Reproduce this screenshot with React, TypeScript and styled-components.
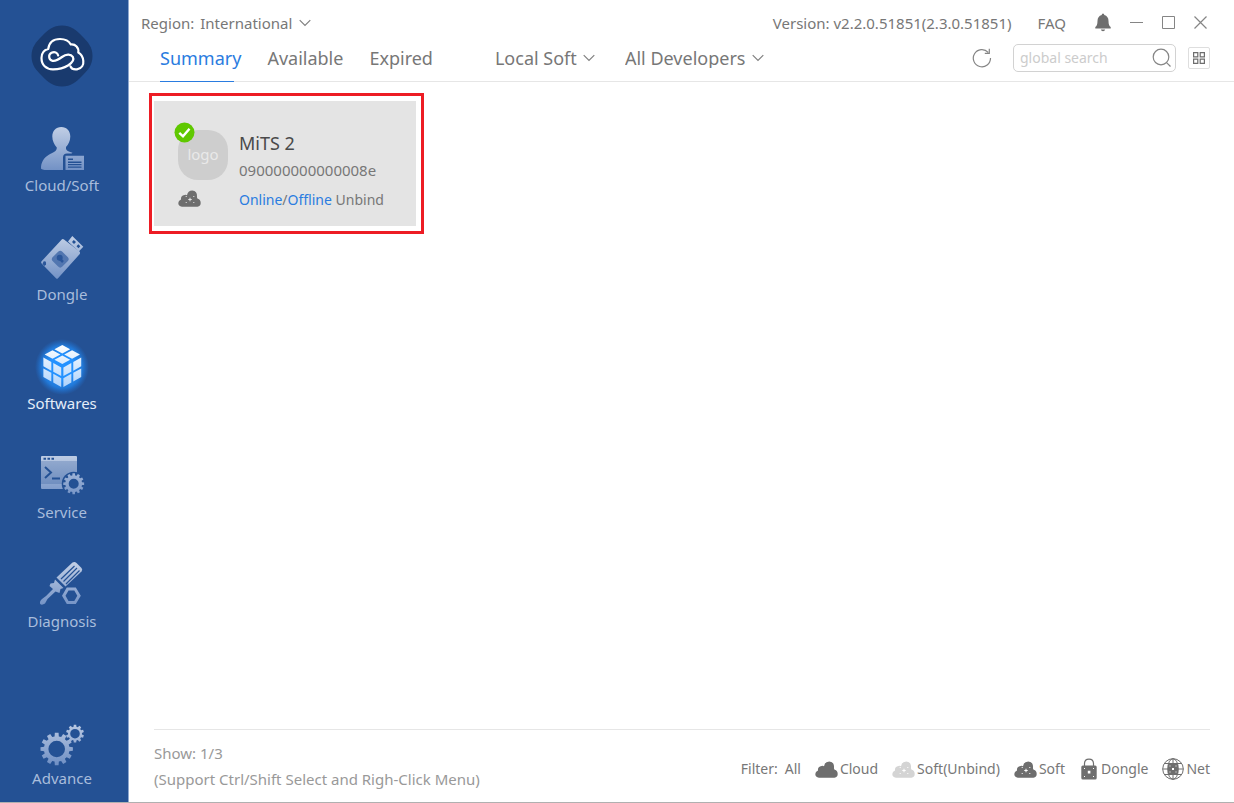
import React from "react";
import styled, { createGlobalStyle, css } from "styled-components";

const color = {
  navy: "#245194",
  blue: "#2a7ce0",
  text: "#777777",
  muted: "#999999",
  line: "#e6e6e6",
  icon: "#6e6e6e",
  stroke: "#858585",
};

const GlobalStyle = createGlobalStyle`
  *, *::before, *::after { box-sizing: border-box; }
  body {
    margin: 0;
    background: #fff;
    color: ${color.text};
    font-family: "Noto Sans", "Open Sans", sans-serif;
    font-size: 15px;
    line-height: 20px;
  }
  button, input, select { font: inherit; color: inherit; }
  svg { display: block; flex: none; }
`;

/* ---------- layout ---------- */

const Shell = styled.div`
  display: grid;
  grid-template-columns: 129px minmax(0, 1fr);
  min-height: 100vh;
  border-bottom: 1px solid #b0b0b0;
`;

const Sidebar = styled.aside`
  display: flex;
  flex-direction: column;
  align-items: center;
  padding: 25px 4px 14px 0;
  background: ${color.navy};
  border-right: 1px solid #8fa8cf;
`;

const SideNav = styled.nav`
  display: flex;
  flex: 1;
  flex-direction: column;
  gap: 40px;
  margin-top: 39px;
  width: 100%;
`;

const SideItem = styled.button<{ $active?: boolean; $last?: boolean }>`
  display: flex;
  flex-direction: column;
  align-items: center;
  gap: 1px;
  padding: 0;
  border: 0;
  background: none;
  color: ${(p) => (p.$active ? "#e4edf9" : "#a9bddc")};
  cursor: pointer;
  ${(p) => p.$last && css`margin-top: auto;`}
`;

const Main = styled.main`
  display: flex;
  flex-direction: column;
  min-width: 0;
`;

const Header = styled.header`
  border-bottom: 1px solid ${color.line};
`;

const TitleRow = styled.div`
  display: flex;
  align-items: center;
  height: 35px;
  padding: 10px 27px 0 12px;
`;

const ToolRow = styled.div`
  display: flex;
  align-items: center;
  height: 46px;
  padding: 0 24px 0 31px;
`;

const Spacer = styled.div`
  flex: 1;
`;

/* ---------- header controls ---------- */

const Picker = styled.label<{ $large?: boolean }>`
  display: flex;
  align-items: center;
  gap: 6px;
  font-size: ${(p) => (p.$large ? 18 : 15)}px;
  & + & { margin-left: 30px; }
`;

const PickerSelect = styled.select`
  appearance: none;
  padding: 0;
  border: 0;
  background: none;
  outline: none;
  cursor: pointer;
`;

const FaqLink = styled.a`
  margin: 0 29px 0 26px;
  color: inherit;
  text-decoration: none;
`;

const WindowControls = styled.div`
  display: flex;
  align-items: center;
  gap: 19px;
`;

const IconButton = styled.button`
  display: flex;
  align-items: center;
  justify-content: center;
  padding: 0;
  border: 0;
  background: none;
  cursor: pointer;
`;

const Tabs = styled.nav`
  display: flex;
  gap: 26px;
  height: 47px;
  align-self: flex-start;
  margin-right: 62px;
`;

const Tab = styled.button<{ $active?: boolean }>`
  position: relative;
  padding: 0 0 1px;
  border: 0;
  background: none;
  font-size: 18px;
  color: ${(p) => (p.$active ? color.blue : color.text)};
  cursor: pointer;
  ${(p) =>
    p.$active &&
    css`
      &::after {
        content: "";
        position: absolute;
        left: 0;
        right: 7px;
        bottom: 0;
        height: 1px;
        background: ${color.blue};
      }
    `}
`;

const SearchBox = styled.label`
  display: flex;
  align-items: center;
  width: 163px;
  height: 28px;
  margin: 0 12px 0 21px;
  padding: 0 3px 0 6px;
  border: 1px solid #d2d2d2;
  border-radius: 5px;
  font-size: 14px;
`;

const SearchInput = styled.input`
  flex: 1;
  min-width: 0;
  padding: 0;
  border: 0;
  outline: none;
  background: none;
  &::placeholder { color: #cccccc; opacity: 1; }
`;

const ViewButton = styled(IconButton)`
  width: 22px;
  height: 22px;
  border: 1px solid #dedede;
  border-radius: 2px;
`;

/* ---------- content ---------- */

const Content = styled.section`
  flex: 1;
  padding: 11px 20px;
`;

const Frame = styled.div`
  width: 275px;
  padding: 5px 5px 5px 2px;
  border: 3px solid #ed1c24;
`;

const Card = styled.article`
  display: flex;
  gap: 11px;
  width: 262px;
  height: 125px;
  padding: 29px 24px 0;
  background: #e4e4e4;
`;

const CardMedia = styled.div`
  display: flex;
  flex-direction: column;
  gap: 10px;
`;

const AppLogo = styled.div`
  position: relative;
  display: flex;
  align-items: center;
  justify-content: center;
  width: 50px;
  height: 50px;
  padding-bottom: 3px;
  border-radius: 20px;
  background: #cecece;
  color: #e9e9e9;
`;

const Badge = styled.span`
  position: absolute;
  top: -8px;
  left: -4px;
`;

const CardText = styled.div`
  display: flex;
  flex-direction: column;
  gap: 2px;
`;

const CardTitle = styled.h2`
  margin: 0;
  font-size: 18px;
  font-weight: 400;
  line-height: 26px;
  color: #4a4a4a;
`;

const CardLine = styled.div<{ $small?: boolean }>`
  font-size: ${(p) => (p.$small ? 14 : 15)}px;
  line-height: ${(p) => (p.$small ? 32 : 24)}px;
  white-space: nowrap;
`;

const CardLink = styled.a<{ $plain?: boolean }>`
  color: ${(p) => (p.$plain ? "inherit" : color.blue)};
  text-decoration: none;
`;

/* ---------- footer ---------- */

const Footer = styled.footer`
  display: flex;
  justify-content: space-between;
  align-items: center;
  height: 73px;
  margin: 0 24px 0 25px;
  border-top: 1px solid ${color.line};
`;

const Status = styled.div`
  color: ${color.muted};
  line-height: 26px;
`;

const Filters = styled.div`
  display: flex;
  align-items: center;
  gap: 14px;
  margin-top: 6px;
  font-size: 14px;
`;

const FilterLead = styled.div`
  display: flex;
  gap: 7px;
`;

const FilterButton = styled.button`
  display: flex;
  align-items: center;
  gap: 2px;
  padding: 0;
  border: 0;
  background: none;
  cursor: pointer;
`;

/* ---------- icons ---------- */

type Pt = [number, number];

const gear = (cx: number, cy: number, outer: number, root: number, hole: number, teeth: number) => {
  const pts: string[] = [];
  const step = (Math.PI * 2) / teeth;
  for (let i = 0; i < teeth; i++) {
    const a = i * step - Math.PI / 2;
    ([[-0.32, root], [-0.22, outer], [0.22, outer], [0.32, root]] as Pt[]).forEach(([o, r]) => {
      pts.push(`${(cx + r * Math.cos(a + o * step)).toFixed(2)} ${(cy + r * Math.sin(a + o * step)).toFixed(2)}`);
    });
  }
  return `M${pts.join("L")}Z M${cx - hole} ${cy}a${hole} ${hole} 0 1 0 ${hole * 2} 0a${hole} ${hole} 0 1 0 ${-hole * 2} 0Z`;
};

const tiles = (o: Pt, u: Pt, v: Pt) => {
  const at = (a: number, b: number) => `${(o[0] + u[0] * a + v[0] * b).toFixed(2)} ${(o[1] + u[1] * a + v[1] * b).toFixed(2)}`;
  const spans: Pt[] = [[0.04, 0.45], [0.55, 0.96]];
  return spans
    .flatMap(([a, b]) => spans.map(([c, d]) => `M${at(a, c)}L${at(b, c)}L${at(b, d)}L${at(a, d)}Z`))
    .join("");
};

const SideIcon = ({ id, children, bright }: { id: string; children: React.ReactNode; bright?: boolean }) => (
  <svg width="44" height="48" viewBox="0 0 44 48" fill={`url(#${id})`} overflow="visible" aria-hidden="true">
    <defs>
      <linearGradient id={id} gradientUnits="userSpaceOnUse" x1="0" y1="0" x2="0" y2="46">
        <stop offset="0" stopColor={bright ? "#ffffff" : "#c3d0e6"} />
        <stop offset="1" stopColor={bright ? "#a9d0fb" : "#6f8fc4"} />
      </linearGradient>
      <radialGradient id={`${id}-halo`}>
        <stop offset="0.45" stopColor="#2492ff" />
        <stop offset="0.75" stopColor="#2187f0" stopOpacity="0.75" />
        <stop offset="1" stopColor="#2078dc" stopOpacity="0" />
      </radialGradient>
    </defs>
    {children}
  </svg>
);

const BrandLogo = () => (
  <svg width="62" height="62" viewBox="0 0 62 62" fill="none" role="img" aria-label="Brand">
    <path
      d="M31 .5C40 .5 45 5 51 11C57 17 61.500 22 61.500 31C61.500 40 57 45 51 51C45 57 40 61.500 31 61.500C22 61.500 17 57 11 51C5 45 .5 40 .5 31C.5 22 5 17 11 11C17 5 22 .5 31 .5Z"
      fill="#193a6e"
    />
    <path
      d="M39.500 41.500C40.500 44 43.500 44.600 46 44.300C51 43.500 52.700 39.500 52.300 36C52 32 50 29 47.300 27.500C48 22.500 44.500 19 39.800 19.500C38 16 34 14 29 14C22 14 18 18 17.200 24C13 25 10.500 28 10.500 33C10.500 40 15 44.300 22 44.300C29 44.300 33 43 37 40.500C41 38 43.500 35 41.800 31.800C39.700 28.500 35 29 31 32C27 35 24 36.300 21.500 35.800C17.500 35 17 29.500 20.500 27.800C23.500 26.300 26.500 27.500 27.200 30.500"
      stroke="#fff"
      strokeWidth="2.200"
      strokeLinecap="round"
      strokeLinejoin="round"
    />
  </svg>
);

const PersonIcon = () => (
  <SideIcon id="g-person">
    <path d="M21.300 1C26.800 1 30.300 5 30.300 10.500C30.300 15 28.300 18.500 26 21C25.500 24.500 28 25.500 32.500 26.700L31.500 27.500H27C24.500 27.500 23 29 23 31.500V44H7C3.500 44 1 43.400 1 42.500C1 36.500 3.500 32 8.500 29C13 26.500 17 25.500 16.800 21.500C14.300 18.500 12.300 15 12.300 10.500C12.300 5 15.800 1 21.300 1Z" />
    <path fillRule="evenodd" d="M25.500 29.700H44V44H25.500ZM28 32.500V34H33V32.500ZM28 35.500V37H41.500V35.500ZM28 38V39.300H41.500V38ZM28 40.500V41.800H41.500V40.500Z" />
  </SideIcon>
);

const DongleIcon = () => (
  <SideIcon id="g-dongle">
    <path d="M22 4.300Q23 3.600 24 4.500L39.500 16.500Q40.500 17.500 39.800 19L18 43.300Q17 44.300 16 43.300L1.600 28.500Q.6 27.300 1.600 26.200Z" />
    <path fillRule="evenodd" d="M32.300 1L43.300 11.800L38.800 16.500L28 6.500ZM33.800 5L32 7L34 9L36 7ZM38.300 9.300L36.500 11.200L38.500 13.200L40.300 11.200Z" />
    <rect x="13.500" y="17.500" width="13.500" height="13.500" rx="3" transform="rotate(45 20.300 24.200)" fill="#5276b0" />
    <circle cx="19.700" cy="22.800" r="3" fill="#2b569a" />
    <path d="M20 24L23 27" stroke="#2b569a" strokeWidth="2.500" />
    <path d="M3.500 26.500Q6.500 25 6 29.500L4.500 31L2.500 29Z" fill="#2b569a" />
  </SideIcon>
);

const CubeIcon = () => (
  <SideIcon id="g-cube" bright>
    <ellipse cx="22" cy="23" rx="27" ry="28" fill="url(#g-cube-halo)" />
    <path d={tiles([22.3, 0.3], [19.2, 10.2], [-19.2, 10.2])} />
    <path d={tiles([2.6, 12.3], [19.4, 10.7], [0, 21.2])} />
    <path d={tiles([22.6, 23], [19.4, -10.7], [0, 21.2])} />
  </SideIcon>
);

const ServiceIcon = () => (
  <SideIcon id="g-service">
    <defs>
      <mask id="service-cut">
        <rect width="44" height="48" fill="#fff" />
        <circle cx="33.700" cy="30.700" r="12" fill="#000" />
      </mask>
    </defs>
    <g mask="url(#service-cut)">
      <path d="M1 4Q1 3 2 3H36Q37 3 37 4V8H1Z" />
      <path d="M1 8H37V31H1Z" opacity=".75" />
      <path d="M1 31H37V35Q37 36 36 36H2Q1 36 1 35Z" />
      <path d="M3.500 5.700H6M7.500 5.700H10M11.500 5.700H14" stroke={color.navy} strokeWidth="2" />
      <path d="M5 14L11 19.500L5 25M12 25.500H20" fill="none" stroke={color.navy} strokeWidth="2" />
    </g>
    <path fillRule="evenodd" d={gear(33.7, 30.7, 10.5, 8.4, 5, 12)} />
  </SideIcon>
);

const DiagnosisIcon = () => (
  <SideIcon id="g-diagnosis">
    <path d="M32.500 .6Q34.500 -1 36.500 1L41.500 6Q43 7.800 41.500 9.600L25.500 24.500L16.500 15.500Z" />
    <path d="M34.500 4L21 17M37 6L23.500 19.500M39.500 8.500L26 22" stroke={color.navy} strokeWidth="1.200" />
    <path d="M15 17.500L23.500 26L20.500 27L19.500 31L15.500 29.500L7.500 37L5 41.500Q2 43.500 .2 42Q-.8 39.500 2 37L6 34L13 27L9.500 24L10.500 21.500L14 21Z" />
    <path fillRule="evenodd" d="M26.800 25.500H35.800L40.800 33.800L35.800 42H26.800L22 33.800ZM28.500 28.500L25.500 33.800L28.500 39H34.300L37.300 33.800L34.300 28.500Z" />
  </SideIcon>
);

const AdvanceIcon = () => (
  <SideIcon id="g-advance">
    <path fillRule="evenodd" d={gear(16.7, 30, 16.3, 12.8, 8.3, 12)} />
    <path fillRule="evenodd" d={gear(35, 14.7, 9, 7, 4.8, 10)} />
  </SideIcon>
);

const Chevron = () => (
  <svg width="12" height="8" viewBox="0 0 12 8" fill="none" stroke="#808080" strokeWidth="1.200" aria-hidden="true">
    <path d="M.7 1.200L6 6.500L11.300 1.200" />
  </svg>
);

const BellIcon = () => (
  <svg width="16" height="19" viewBox="0 0 16 19" fill={color.icon} aria-hidden="true">
    <path d="M8 .5Q9.300 .5 9.300 2Q13.500 3.300 13.500 8C13.500 11.500 14.300 13 15.700 14V15.500H.3V14C1.700 13 2.500 11.500 2.500 8Q2.500 3.300 6.700 2Q6.700 .5 8 .5Z" />
    <path d="M5.800 16.500H10.200Q9.800 18.300 8 18.300Q6.200 18.300 5.800 16.500Z" />
  </svg>
);

const MinimizeIcon = () => (
  <svg width="13" height="13" viewBox="0 0 13 13" stroke={color.stroke} aria-hidden="true">
    <path d="M0 6.500H13" />
  </svg>
);

const MaximizeIcon = () => (
  <svg width="13" height="13" viewBox="0 0 13 13" fill="none" stroke={color.stroke} aria-hidden="true">
    <path d="M.5 .5H12.500V12.500H.5Z" />
  </svg>
);

const CloseIcon = () => (
  <svg width="13" height="13" viewBox="0 0 13 13" fill="none" stroke={color.stroke} strokeWidth="1.200" aria-hidden="true">
    <path d="M.5 .5L12.500 12.500M12.500 .5L.5 12.500" />
  </svg>
);

const RefreshIcon = () => (
  <svg width="20" height="20" viewBox="0 0 20 20" fill="none" stroke={color.stroke} strokeWidth="1.200" aria-hidden="true">
    <path d="M18.500 10A8.600 8.600 0 1 1 16.200 4.300M17.300 .8V5.300H12.800" />
  </svg>
);

const SearchIcon = () => (
  <svg width="20" height="20" viewBox="0 0 20 20" fill="none" stroke={color.stroke} strokeWidth="1.200" aria-hidden="true">
    <circle cx="9" cy="9" r="7.800" />
    <path d="M14.800 14.800L18.500 18.500" />
  </svg>
);

const GridIcon = () => (
  <svg width="12" height="12" viewBox="0 0 12 12" fill="none" stroke={color.icon} strokeWidth="1.200" aria-hidden="true">
    <path d="M.6 .6H4.800V4.800H.6ZM7.200 .6H11.400V4.800H7.200ZM.6 7.200H4.800V11.400H.6ZM7.200 7.200H11.400V11.400H7.200Z" />
  </svg>
);

const CheckIcon = () => (
  <svg width="21" height="21" viewBox="0 0 21 21" aria-hidden="true">
    <circle cx="10.500" cy="10.500" r="10" fill="#5fc800" />
    <path d="M5.300 10.800L9 14.300L15.500 6.800" fill="none" stroke="#fff" strokeWidth="2.400" />
  </svg>
);

const CloudIcon = ({ fill = color.icon, chip, dots = "#e4e4e4" }: { fill?: string; chip?: boolean; dots?: string }) => (
  <svg width="23" height="17" viewBox="0 0 23 17" aria-hidden="true">
    <path
      fill={fill}
      d="M4 16.700Q.3 16.300 .3 13Q.3 10.500 3 9.500Q2.500 5.500 6.500 5Q8 4.500 9 5.200Q9.800 .5 14.300 .5Q19.300 .8 19 6.500Q18.800 7.800 19.700 8.800Q22.700 9.500 22.700 13Q22.700 16.300 19.500 16.700Z"
    />
    {chip && (
      <path
        fill={dots}
        d="M11.500 7.800h1v1.200h1.200v1h-1.200v1.200h-1V10h-1.200V9h1.200ZM7.700 6h1v1h-1ZM15.300 6h1v1h-1ZM7.700 12h1v1h-1ZM15.300 12h1v1h-1Z"
      />
    )}
  </svg>
);

const LockIcon = () => (
  <svg width="20" height="22" viewBox="0 0 20 22" aria-hidden="true">
    <path d="M5.500 8V5.800Q5.500 1.200 10 1.200Q14.500 1.200 14.500 5.800V8" fill="none" stroke={color.icon} strokeWidth="1.200" />
    <rect x="2.300" y="7.500" width="15.400" height="14" rx="1.500" fill={color.icon} />
    <path fill="#fff" d="M8.800 12.800h2.600v2.600H8.800ZM5 10h1v1H5ZM14 10h1v1h-1ZM5 18h1v1H5ZM14 18h1v1h-1Z" />
  </svg>
);

const GlobeIcon = () => (
  <svg width="22" height="22" viewBox="0 0 22 22" aria-hidden="true">
    <g fill="none" stroke={color.icon}>
      <circle cx="11" cy="11" r="10.300" />
      <ellipse cx="11" cy="11" rx="5.300" ry="10.300" />
      <path d="M11 .7V21.300M.7 11H21.300M2.300 5.500H19.700M2.300 16.500H19.700" />
    </g>
    <rect x="6" y="6" width="10" height="10" rx="1" fill={color.icon} />
    <path fill="#fff" d="M10 10h2v2h-2ZM7.500 7.500h1v1h-1ZM13.500 7.500h1v1h-1ZM7.500 13.500h1v1h-1ZM13.500 13.500h1v1h-1Z" />
  </svg>
);

/* ---------- data ---------- */

const sideItems = [
  { label: "Cloud/Soft", Icon: PersonIcon },
  { label: "Dongle", Icon: DongleIcon },
  { label: "Softwares", Icon: CubeIcon, active: true },
  { label: "Service", Icon: ServiceIcon },
  { label: "Diagnosis", Icon: DiagnosisIcon },
  { label: "Advance", Icon: AdvanceIcon, last: true },
];

const filters = [
  { label: "Cloud", icon: <CloudIcon /> },
  { label: "Soft(Unbind)", icon: <CloudIcon fill="#d4d4d4" chip dots="#fff" /> },
  { label: "Soft", icon: <CloudIcon chip dots="#fff" /> },
  { label: "Dongle", icon: <LockIcon /> },
  { label: "Net", icon: <GlobeIcon /> },
];

export default function App() {
  return (
    <>
      <GlobalStyle />
      <Shell>
        <Sidebar>
          <BrandLogo />
          <SideNav aria-label="Main">
            {sideItems.map(({ label, Icon, active, last }) => (
              <SideItem key={label} type="button" $active={active} $last={last}>
                <Icon />
                {label}
              </SideItem>
            ))}
          </SideNav>
        </Sidebar>

        <Main>
          <Header>
            <TitleRow>
              <Picker>
                Region:
                <PickerSelect defaultValue="International">
                  <option>International</option>
                </PickerSelect>
                <Chevron />
              </Picker>
              <Spacer />
              <span>Version: v2.2.0.51851(2.3.0.51851)</span>
              <FaqLink href="#faq">FAQ</FaqLink>
              <WindowControls>
                <IconButton type="button" aria-label="Notifications"><BellIcon /></IconButton>
                <IconButton type="button" aria-label="Minimize"><MinimizeIcon /></IconButton>
                <IconButton type="button" aria-label="Maximize"><MaximizeIcon /></IconButton>
                <IconButton type="button" aria-label="Close"><CloseIcon /></IconButton>
              </WindowControls>
            </TitleRow>
            <ToolRow>
              <Tabs aria-label="Licenses">
                <Tab type="button" $active>Summary</Tab>
                <Tab type="button">Available</Tab>
                <Tab type="button">Expired</Tab>
              </Tabs>
              <Picker $large>
                <PickerSelect aria-label="Source" defaultValue="Local Soft">
                  <option>Local Soft</option>
                </PickerSelect>
                <Chevron />
              </Picker>
              <Picker $large>
                <PickerSelect aria-label="Developer" defaultValue="All Developers">
                  <option>All Developers</option>
                </PickerSelect>
                <Chevron />
              </Picker>
              <Spacer />
              <IconButton type="button" aria-label="Refresh"><RefreshIcon /></IconButton>
              <SearchBox>
                <SearchInput type="text" aria-label="Search" placeholder="global search" />
                <SearchIcon />
              </SearchBox>
              <ViewButton type="button" aria-label="Grid view"><GridIcon /></ViewButton>
            </ToolRow>
          </Header>

          <Content>
            <Frame>
              <Card>
                <CardMedia>
                  <AppLogo>
                    logo
                    <Badge><CheckIcon /></Badge>
                  </AppLogo>
                  <CloudIcon chip />
                </CardMedia>
                <CardText>
                  <CardTitle>MiTS 2</CardTitle>
                  <CardLine>090000000000008e</CardLine>
                  <CardLine $small>
                    <CardLink href="#online">Online</CardLink>/<CardLink href="#offline">Offline</CardLink>{" "}
                    <CardLink href="#unbind" $plain>Unbind</CardLink>
                  </CardLine>
                </CardText>
              </Card>
            </Frame>
          </Content>

          <Footer>
            <Status>
              <div>Show: 1/3</div>
              <div>(Support Ctrl/Shift Select and Righ-Click Menu)</div>
            </Status>
            <Filters>
              <FilterLead>
                <span>Filter:</span>
                <FilterButton type="button">All</FilterButton>
              </FilterLead>
              {filters.map(({ label, icon }) => (
                <FilterButton key={label} type="button">
                  {icon}
                  {label}
                </FilterButton>
              ))}
            </Filters>
          </Footer>
        </Main>
      </Shell>
    </>
  );
}
